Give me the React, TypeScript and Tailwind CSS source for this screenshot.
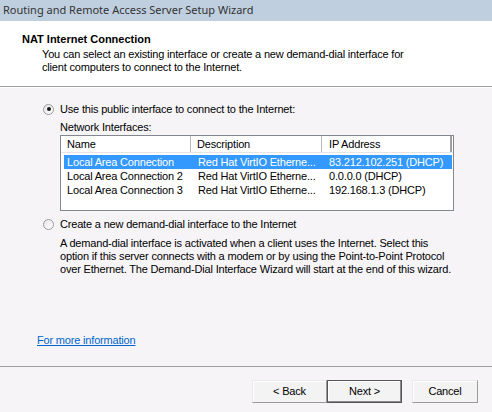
import React from 'react';

const rows = [
  { name: 'Local Area Connection', desc: 'Red Hat VirtIO Etherne...', ip: '83.212.102.251 (DHCP)' },
  { name: 'Local Area Connection 2', desc: 'Red Hat VirtIO Etherne...', ip: '0.0.0.0 (DHCP)' },
  { name: 'Local Area Connection 3', desc: 'Red Hat VirtIO Etherne...', ip: '192.168.1.3 (DHCP)' },
];

const Radio = ({ checked }: { checked?: boolean }) => (
  <div className="w-[11px] h-[11px] rounded-full border border-[#9a9a9a] bg-gradient-to-br from-[#e6e6e6] to-white flex items-center justify-center shrink-0">
    {checked && <div className="w-[4px] h-[4px] rounded-full bg-[#1a1a1a]" />}
  </div>
);

const Button = ({ label, primary, w }: { label: string; primary?: boolean; w: string }) => (
  <div
    className={`${w} h-[23px] flex items-center justify-center bg-[#f3f3f3] text-[11px] text-black ${
      primary
        ? 'border border-[#555] shadow-[inset_-1px_-1px_0_#8a8a8a,inset_1px_1px_0_#fff]'
        : 'border border-t-[#e8e8e8] border-l-[#e8e8e8] border-r-[#9a9a9a] border-b-[#9a9a9a] shadow-[inset_1px_1px_0_#fff]'
    }`}
  >
    {label}
  </div>
);

export default function App() {
  return (
    <div
      className="w-[492px] h-[412px] flex flex-col bg-[#f6f4f7] text-black overflow-hidden tracking-[-0.18px]"
      style={{ fontFamily: '"Liberation Sans", Arial, sans-serif' }}
    >
      {/* window caption */}
      <div
        className="h-[21px] bg-[#bfcfdf] flex items-center pl-[3px] text-[11px] text-[#333] tracking-normal"
        style={{ fontFamily: '"Noto Sans", "Open Sans", sans-serif' }}
      >
        Routing and Remote Access Server Setup Wizard
      </div>

      {/* wizard header */}
      <div className="h-[66px] bg-white border-b border-[#a0a0a0] pl-[22px] pt-[12px]">
        <div className="text-[11px] font-bold leading-[13px] tracking-normal">NAT Internet Connection</div>
        <div className="pl-[20px] pt-[2px] text-[11px] leading-[13px]">
          <div>You can select an existing interface or create a new demand-dial interface for</div>
          <div>client computers to connect to the Internet.</div>
        </div>
      </div>

      {/* page body */}
      <div className="flex-1 border-t border-white pl-[43px] pt-[14px] text-[11px]">
        <div className="flex items-center gap-[6px] h-[14px]">
          <Radio checked />
          <span>Use this public interface to connect to the Internet:</span>
        </div>
        <div className="pl-[17px]">
          <div className="h-[14px] mt-[4px] leading-[14px]">Network Interfaces:</div>
          <div className="mt-[1px] w-[394px] h-[76px] border border-[#828790] bg-white">
            <div className="flex h-[17px] border-b border-[#e5e5e5]">
              <div className="w-[130px] pl-[6px] flex items-center border-r border-[#b8b8b8]">Name</div>
              <div className="w-[131px] pl-[6px] flex items-center border-r border-[#b8b8b8]">Description</div>
              <div className="w-[130px] pl-[7px] flex items-center border-r-2 border-[#a0a0a0]">IP Address</div>
            </div>
            <div className="pt-[2px] pl-[3px] pr-[1px]">
              {rows.map((r, i) => (
                <div
                  key={r.name}
                  className={`flex h-[14px] items-center leading-[14px] ${i === 0 ? 'bg-[#3399ff] text-white' : ''}`}
                >
                  <div className="w-[131px] pl-[3px] whitespace-nowrap">{r.name}</div>
                  <div className="w-[131px] pl-[3px] whitespace-nowrap">{r.desc}</div>
                  <div className="flex-1 pl-[3px] whitespace-nowrap">{r.ip}</div>
                </div>
              ))}
            </div>
          </div>
        </div>

        <div className="flex items-center gap-[6px] h-[14px] mt-[6px]">
          <Radio />
          <span>Create a new demand-dial interface to the Internet</span>
        </div>
        <div className="pl-[17px] mt-[6px] leading-[13px]">
          <div>A demand-dial interface is activated when a client uses the Internet. Select this</div>
          <div>option if this server connects with a modem or by using the Point-to-Point Protocol</div>
          <div>over Ethernet. The Demand-Dial Interface Wizard will start at the end of this wizard.</div>
        </div>

        <div className="-ml-[6px] mt-[57px] text-[#0066cc] underline leading-[14px]">For more information </div>
      </div>

      {/* button row */}
      <div className="h-[46px] border-t border-[#a0a0a0] flex items-start pt-[13px] pr-[14px] justify-end">
        <Button label="< Back" w="w-[75px]" />
        <Button label="Next >" w="w-[75px]" primary />
        <div className="w-[10px]" />
        <Button label="Cancel" w="w-[66px]" />
      </div>
    </div>
  );
}
